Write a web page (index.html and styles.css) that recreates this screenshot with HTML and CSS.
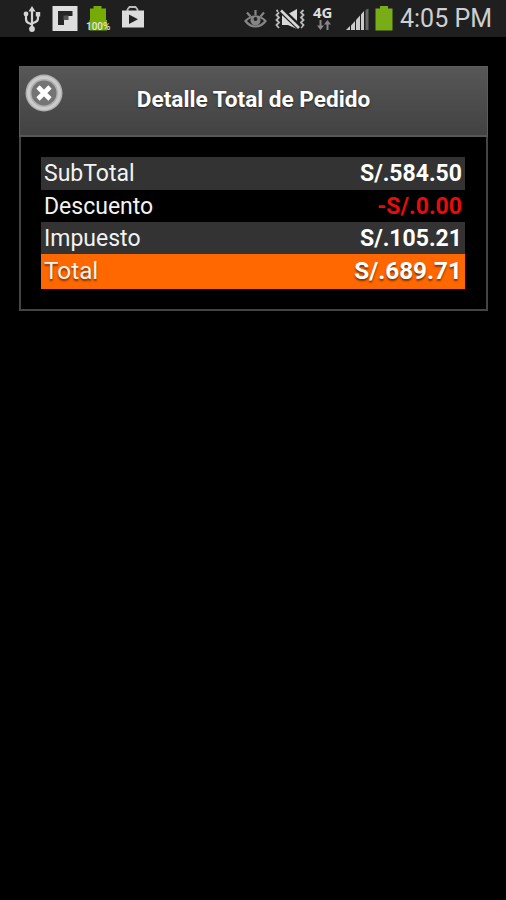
FILE: index.html
```html
<!DOCTYPE html>
<html lang="es">
	<head>
		<meta charset="utf-8">
		<title>Detalle Total de Pedido</title>
		<link rel="stylesheet" href="styles.css">
	</head>
	<body>
		<div class="status">
			<div class="icons left">
				<!-- usb -->
				<svg width="20" height="36" viewBox="0 0 20 36">
					<g fill="none" stroke="#d4d4d4" stroke-width="2.2">
						<path d="M10 9V30M4 14v5q0 3 2.500 4l3.500 1.500M16 14v4q0 3-2.500 4l-3.500 1.500"/>
					</g>
					<g fill="#d4d4d4">
						<path d="M10 6l3.500 5.500h-7z"/>
						<circle cx="10" cy="29" r="2.900"/>
						<circle cx="4" cy="14" r="2.400"/>
						<path d="M13.800 12h4.400v4.400h-4.400z"/>
					</g>
				</svg>
				<!-- flipboard -->
				<svg width="26" height="36" viewBox="0 0 26 36">
					<path fill="#dedede" d="M.500 6h25v25H.500z"/>
					<path fill="#262626" d="M6 11h14.500v5H12v9H6z"/>
					<path fill="#555" d="M11.500 15.500h5V20h-5z"/>
				</svg>
				<div class="full">
					<svg width="20" height="36" viewBox="0 0 20 36">
						<path fill="#76ab05" d="M5.500 6h8v2.500H18V20h1v10.500H1.500V20H2V8.500h3.500z"/>
					</svg>
					<span>100%</span>
				</div>
				<!-- play store -->
				<svg width="24" height="36" viewBox="0 0 24 36">
					<path fill="none" stroke="#bcbcbc" stroke-width="1.800" d="M6.500 12V9.500l2-2.500h6l2 2.500V12"/>
					<path fill="#dcdcdc" d="M1 10.500h22v17H1z"/>
					<path fill="#222" d="M8 14.500l9 4.700-9 4.800z"/>
				</svg>
			</div>
			<div class="icons right">
				<!-- smart stay -->
				<svg class="eye" width="24" height="36" viewBox="0 0 24 36">
					<g fill="none" stroke="#858585" stroke-width="2.200">
						<path d="M1.500 21q4-4.500 10-4.500T21.500 21q-4 5.500-10 5.500T1.500 21z"/>
						<path d="M11.500 10v5M3 12.500l3.500 4M20 12.500l-3.500 4"/>
					</g>
					<circle cx="11.500" cy="20.500" r="5" fill="#858585"/>
					<circle cx="11.500" cy="19" r="1.900" fill="#222"/>
				</svg>
				<!-- vibrate -->
				<svg class="mute" width="30" height="36" viewBox="0 0 30 36">
					<path fill="none" stroke="#bbb" stroke-width="1.800" d="M1.500 10l2.500 2.500L1.500 15 4 17.500 1.500 20 4 22.500 1.500 25 4 28M28.500 10L26 12.500l2.500 2.500-2.500 2.500 2.500 2.500-2.500 2.500 2.500 2.500-2.500 3"/>
					<path fill="#d8d8d8" d="M7 14v11h6l9 4V9l-9 5z"/>
					<path stroke="#1f1f1f" stroke-width="6" d="M5 9l20 19"/>
					<path stroke="#d8d8d8" stroke-width="2.600" d="M6 10.500L24 28"/>
				</svg>
				<div class="net">
					<span>4G</span>
					<svg width="14" height="10" viewBox="0 0 14 10">
						<path fill="#888" d="M2.500 0h2v5.500H7L3.500 10 0 5.500h2.500zM9.500 10h2V4.500H14L10.500 0 7 4.500h2.500z"/>
					</svg>
				</div>
				<!-- signal -->
				<svg class="signal" width="24" height="36" viewBox="0 0 24 36">
					<path fill="#ccc" d="M0 30l4-4V30zM5 25.500l4-4.500v9H5zM10 20l4-4.500V30h-4zM15 14.500l3-3.500v19h-3z"/>
					<path fill="#666" d="M19.500 10l3-1.500V30h-3z"/>
				</svg>
				<svg class="batt" width="18" height="36" viewBox="0 0 18 36">
					<path fill="#78ad18" d="M5 6h8v2.500h4.500v22H.500v-22H5z"/>
				</svg>
				<span class="time">4:05 PM</span>
			</div>
		</div>
		<div class="dialog">
			<div class="head">
				<a class="close">
					<svg width="38" height="38" viewBox="0 0 38 38">
						<circle cx="19" cy="19" r="18.500" fill="#b0b0b0"/>
						<circle cx="19" cy="19" r="15.500" fill="none" stroke="#cbcbcb" stroke-width="3"/>
						<circle cx="19" cy="19" r="12.500" fill="#747474"/>
						<path stroke="#fff" stroke-width="4.600" d="M13 13l12 12M25 13L13 25"/>
					</svg>
				</a>
				<h1>Detalle Total de Pedido</h1>
			</div>
			<ul>
				<li class="gray"><span>SubTotal</span><b>S/.584.50</b></li>
				<li><span>Descuento</span><b class="red">-S/.0.00</b></li>
				<li class="gray"><span>Impuesto</span><b>S/.105.21</b></li>
				<li class="total"><span>Total</span><b>S/.689.71</b></li>
			</ul>
		</div>
	</body>
</html>
```

FILE: styles.css
```css
*{margin: 0;padding: 0;box-sizing: border-box;}
body{
	background: #000;
	color: #fff;
	font-family: Roboto, "Liberation Sans", sans-serif;
	min-height: 900px;
}
svg{
	display: block;
}
.status{
	height: 37px;
	background: #1f1f1f;
	display: flex;
	justify-content: space-between;
	padding: 0 13px 0 22px;
}
.icons{
	display: flex;
	height: 36px;
}
.left{
	gap: 10px;
}
.full{
	position: relative;
	width: 24px;
	margin-right: -1px;
}
.full span{
	position: absolute;
	left: -2px;
	top: 21px;
	font-size: 10px;
	line-height: 11px;
	font-weight: 500;
	color: #e4e4e4;
}
.mute{
	margin-left: 7px;
}
.net{
	width: 21px;
	margin-left: 8px;
	padding-top: 5px;
}
.net span{
	display: block;
	font: bold 15px/14px "Open Sans", sans-serif;
	color: #ddd;
}
.net svg{
	margin: 1px 0 0 4px;
}
.signal{
	margin-left: 12px;
}
.batt{
	margin-left: 5px;
}
.time{
	width: 93px;
	margin-left: 7px;
	font-size: 25px;
	line-height: 37px;
	color: #cfcfcf;
	white-space: nowrap;
}
.dialog{
	width: 469px;
	height: 245px;
	margin: 29px 0 0 19px;
	border: 2px solid #444;
}
.head{
	position: relative;
	height: 71px;
	margin: -2px -2px 0;
	padding-top: 19px;
	border: 1px solid #5c5c5c;
	border-bottom: 2px solid #575757;
	background: linear-gradient(#575757, #424242);
}
.close{
	position: absolute;
	left: 5px;
	top: 7px;
}
.head h1{
	font-size: 22.6px;
	line-height: 28px;
	text-align: center;
	text-shadow: 0 1px 2px #222;
}
.dialog ul{
	list-style: none;
	margin: 20px 21px 0 20px;
}
.dialog li{
	display: flex;
	justify-content: space-between;
	height: 32px;
	padding: 0 3px;
	font-size: 23px;
	line-height: 33px;
	color: #f2f2f2;
}
.dialog li b{
	color: #fff;
}
.dialog li.gray{
	background: #333;
}
.dialog li:first-child{
	height: 33px;
}
.dialog li .red{
	color: #e80c0c;
}
.dialog li.total{
	height: 35px;
	font-size: 24.3px;
	background: #ff6700;
	text-shadow: 0 2px 2px rgba(0,0,0,0.5);
}
```
